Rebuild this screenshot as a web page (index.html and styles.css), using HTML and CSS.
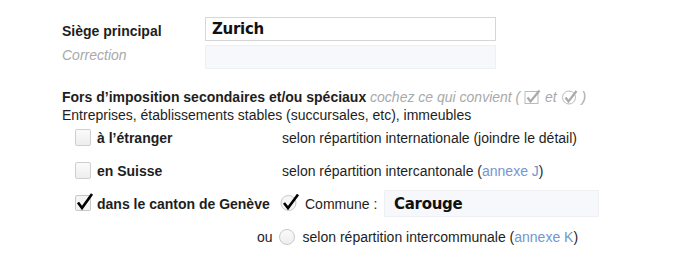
FILE: index.html
```html
<!DOCTYPE html>
<html lang="fr">
<head>
<meta charset="utf-8">
<link rel="stylesheet" href="styles.css">
</head>
<body>
<div class="form">
  <div class="row head-row">
    <div class="lbl strong down">Siège principal</div>
    <div class="field white"><span class="hand">Zurich</span></div>
  </div>
  <div class="row corr-row">
    <div class="lbl muted up">Correction</div>
    <div class="field pale"></div>
  </div>

  <div class="section">
    <div class="title"><b>Fors d’imposition secondaires et/ou spéciaux</b> <span class="hint">cochez ce qui convient (
      <svg class="mini" width="17" height="16" viewBox="0 0 17 16"><rect x="1" y="2.5" width="13" height="12" fill="#fff" stroke="#bbb"/><path d="M3.5 8.5 L6.5 12.5 L15.5 1.5" fill="none" stroke="#aaa" stroke-width="2.2"/></svg>
      et
      <svg class="mini" width="17" height="16" viewBox="0 0 17 16"><circle cx="8" cy="8.5" r="6.5" fill="#fff" stroke="#bbb"/><path d="M4.5 8.5 L7.5 12.5 L15.5 2" fill="none" stroke="#aaa" stroke-width="2.2"/></svg>
      )</span></div>
    <div class="sub">Entreprises, établissements stables (succursales, etc), immeubles</div>
  </div>

  <div class="opt o1">
    <div class="optl"><span class="box"></span><b>à l’étranger</b></div>
    <div>selon répartition internationale (joindre le détail)</div>
  </div>
  <div class="opt o2">
    <div class="optl"><span class="box"></span><b>en Suisse</b></div>
    <div>selon répartition intercantonale (<span class="link">annexe J</span>)</div>
  </div>
  <div class="opt ge">
    <div class="optl tight">
      <svg class="chk" width="20" height="20" viewBox="0 0 20 20"><rect x="0.5" y="3.5" width="15" height="15" rx="1.5" fill="#f4f4f4" stroke="#c8c8c8"/><path d="M3 10.5 L7 16 L17 2" fill="none" stroke="#000" stroke-width="2.6" stroke-linejoin="miter"/></svg>
      <b>dans le canton de Genève</b>
    </div>
    <div class="commune">
      <svg class="chk" width="21" height="20" viewBox="0 0 21 20"><circle cx="8.5" cy="11" r="7.5" fill="#f6f6f6" stroke="#c8c8c8"/><path d="M4 11 L8 16 L18 2.5" fill="none" stroke="#000" stroke-width="2.6"/></svg>
      <span class="clbl">Commune :</span>
      <div class="field pale cfield"><span class="hand">Carouge</span></div>
    </div>
  </div>
  <div class="ou">
    <span class="oulbl">ou</span>
    <span class="radio"></span>
    <span>selon répartition intercommunale (<span class="link">annexe K</span>)</span>
  </div>
</div>
</body>
</html>
```

FILE: styles.css
```css
html, body {
  margin: 0;
  padding: 0;
  background: #fff;
}
body {
  font-family: "Liberation Sans", Arial, sans-serif;
  font-size: 14px;
  color: #1e1e1e;
}
.form {
  padding: 17px 0 0 62px;
  width: 600px;
}
.row {
  display: flex;
  align-items: center;
}
.lbl {
  width: 143px;
}
.lbl.down { padding-top: 4px; }
.lbl.up { padding-bottom: 5px; }
.strong { font-weight: bold; }
.muted {
  font-style: italic;
  color: #a9a9a9;
}
.field {
  width: 283px;
  height: 22px;
  display: flex;
  align-items: center;
  padding-left: 6px;
  box-sizing: content-box;
}
.white {
  border: 1px solid #d6d6d6;
  background: #fff;
}
.pale {
  border: 1px solid #eef0f4;
  background: #f6f8fc;
}
.corr-row { margin-top: 4px; }
.hand {
  font-family: "Comic Sans MS", "DejaVu Sans", sans-serif;
  font-weight: bold;
  font-size: 15px;
  color: #111;
  letter-spacing: -0.3px;
}
.section {
  margin-top: 19px;
}
.title {
  line-height: 18px;
  white-space: nowrap;
}
.hint {
  font-style: italic;
  color: #a9a9a9;
}
.mini {
  vertical-align: -3px;
}
.sub {
  line-height: 18px;
}
.opt {
  display: flex;
  align-items: center;
  height: 17px;
  margin-left: 13px;
}
.o1 { margin-top: 5px; }
.o2 { margin-top: 16px; }
.optl {
  width: 207px;
  display: flex;
  align-items: center;
}
.box {
  width: 16px;
  height: 17px;
  border: 1px solid #cfcfcf;
  border-radius: 2px;
  background: linear-gradient(#fafafa, #eeeeee);
  margin-right: 6px;
  box-sizing: border-box;
  display: inline-block;
}
.chk {
  margin-right: 2px;
  margin-top: -4px;
}
.ge { margin-top: 11px; height: 27px; }
.optl.tight { width: 205px; }
.commune {
  display: flex;
  align-items: center;
}
.clbl {
  margin-left: 2px;
  width: 79px;
}
.cfield {
  width: 204px;
  height: 25px;
  padding-left: 9px;
}
.ou {
  display: flex;
  align-items: center;
  height: 16px;
  margin-left: 195px;
  margin-top: 12px;
}
.oulbl { margin-right: 6px; }
.radio {
  width: 16px;
  height: 16px;
  border-radius: 50%;
  border: 1px solid #c8c8c8;
  background: linear-gradient(#fafafa, #eeeeee);
  box-sizing: border-box;
  margin-right: 8px;
}
.link { color: #7196d0; }
```
